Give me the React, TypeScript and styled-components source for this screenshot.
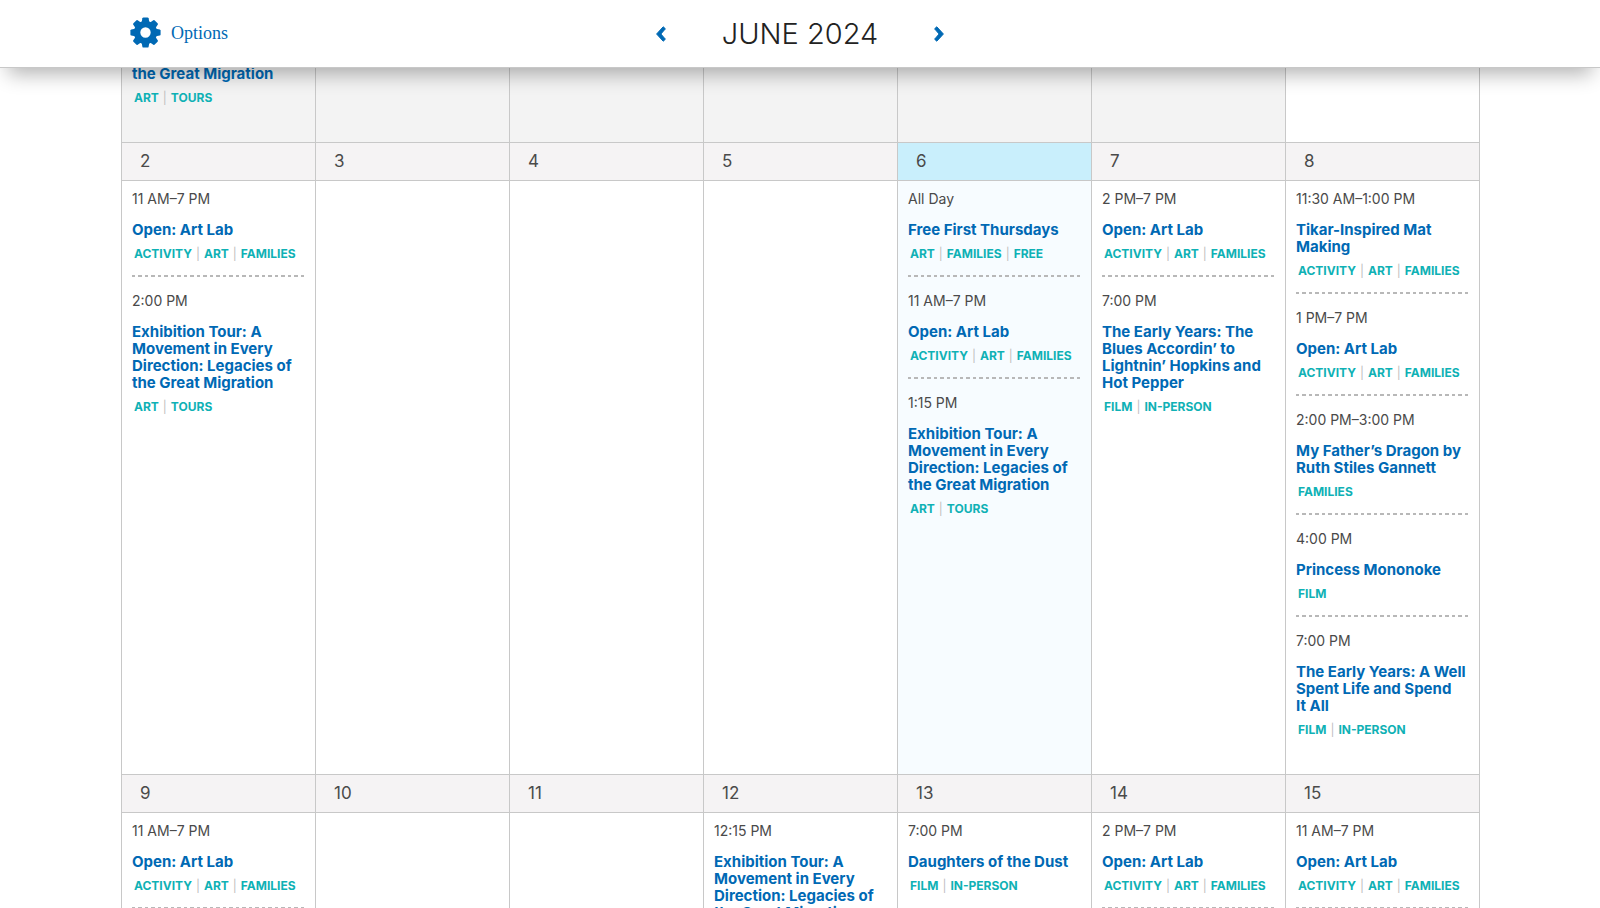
import React from 'react';
import styled, { createGlobalStyle } from 'styled-components';

const Global = createGlobalStyle`
  *, *::before, *::after { box-sizing: border-box; }
  html, body { margin: 0; background: #fff; }
  body { font-family: Inter, "Open Sans", sans-serif; color: #4a4a4a; }
`;

const Page = styled.div`
  height: 100vh;
  overflow: hidden;
`;

const Toolbar = styled.header`
  position: relative;
  z-index: 1;
  display: grid;
  grid-template-columns: 1fr auto 1fr;
  align-items: center;
  height: 68px;
  padding: 0 130px;
  background: #fff;
  border-bottom: 1px solid #c8c8c8;
  box-shadow: 0 14px 20px -8px rgba(0, 0, 0, 0.3);
`;

const OptionsButton = styled.button`
  display: flex;
  align-items: center;
  justify-self: start;
  gap: 10px;
  padding: 0 0 2px;
  border: 0;
  background: none;
  color: #0069b4;
  font: 18px/30px "Liberation Serif", serif;
  cursor: pointer;
`;

const MonthNav = styled.nav`
  display: flex;
  align-items: center;
  gap: 56px;
`;

const MonthTitle = styled.h1`
  margin: 0;
  color: #222;
  font: 300 29px/36px Inter, sans-serif;
`;

const ArrowButton = styled.button`
  display: flex;
  padding: 0;
  border: 0;
  background: none;
  color: #0069b4;
  cursor: pointer;
`;

const Calendar = styled.table`
  width: calc(85% - 1px);
  margin: -3px 7.5% 0 auto;
  border-collapse: collapse;
  table-layout: fixed;
`;

const DayNumber = styled.th<{ $today?: boolean }>`
  height: 38px;
  padding: 0 18px 2px;
  border: 1px solid #c8c8c8;
  background: ${(p) => (p.$today ? '#c9effc' : '#f5f3f4')};
  font-size: 17px;
  font-weight: 400;
  line-height: 20px;
  text-align: left;
`;

const DayCell = styled.td<{ $tone?: 'past' | 'today' }>`
  padding: 0 10px ${(p) => (p.$tone === 'past' ? 35 : 23)}px;
  border: 1px solid #c8c8c8;
  border-top: 0;
  background: ${(p) => (p.$tone === 'past' ? '#f3f3f3' : p.$tone === 'today' ? '#f7fcff' : '#fff')};
  vertical-align: top;
`;

const Event = styled.article<{ $divided: boolean }>`
  padding-top: 7px;

  & + & {
    padding-top: 13px;
  }

  &::after {
    content: "";
    display: block;
    height: ${(p) => (p.$divided ? 2 : 0)}px;
    margin-top: 12px;
    background: repeating-linear-gradient(
      90deg,
      #b8b8b8 0 3px,
      transparent 3px 6px,
      #b8b8b8 6px 10px,
      transparent 10px 13px
    );
  }
`;

const Time = styled.p`
  margin: 0 0 12px;
  font-size: 14px;
  line-height: 21px;
`;

const EventLink = styled.a`
  display: block;
  color: #0069b4;
  font-size: 15px;
  font-weight: 700;
  line-height: 17px;
  text-decoration: none;
`;

const Tags = styled.ul`
  display: flex;
  margin: 7px 0 0;
  padding: 0 2px;
  list-style: none;
`;

const Tag = styled.li`
  font-size: 12px;
  font-weight: 700;
  line-height: 18px;
  text-transform: uppercase;

  & + &::before {
    content: "|";
    margin: 0 4px;
    color: #c0c0c0;
    font-weight: 400;
  }
`;

const TagLink = styled.a`
  color: #0fb1b5;
  text-decoration: none;
`;

type Item = { time?: string; title: string; tags: string[] };
type Day = { n?: number; tone?: 'past' | 'today'; more?: boolean; items: Item[] };

const lab = (time: string): Item => ({ time, title: 'Open: Art Lab', tags: ['Activity', 'Art', 'Families'] });
const tour = (time: string): Item => ({
  time,
  title: 'Exhibition Tour: A Movement in Every Direction: Legacies of the Great Migration',
  tags: ['Art', 'Tours'],
});

const weeks: Day[][] = [
  [
    { n: 2, items: [lab('11 AM–7 PM'), tour('2:00 PM')] },
    { n: 3, items: [] },
    { n: 4, items: [] },
    { n: 5, items: [] },
    {
      n: 6,
      tone: 'today',
      items: [
        { time: 'All Day', title: 'Free First Thursdays', tags: ['Art', 'Families', 'Free'] },
        lab('11 AM–7 PM'),
        tour('1:15 PM'),
      ],
    },
    {
      n: 7,
      items: [
        lab('2 PM–7 PM'),
        { time: '7:00 PM', title: 'The Early Years: The Blues Accordin’ to Lightnin’ Hopkins and Hot Pepper', tags: ['Film', 'In-Person'] },
      ],
    },
    {
      n: 8,
      items: [
        { time: '11:30 AM–1:00 PM', title: 'Tikar-Inspired Mat Making', tags: ['Activity', 'Art', 'Families'] },
        lab('1 PM–7 PM'),
        { time: '2:00 PM–3:00 PM', title: 'My Father’s Dragon by Ruth Stiles Gannett', tags: ['Families'] },
        { time: '4:00 PM', title: 'Princess Mononoke', tags: ['Film'] },
        { time: '7:00 PM', title: 'The Early Years: A Well Spent Life and Spend It\u00a0All', tags: ['Film', 'In-Person'] },
      ],
    },
  ],
  [
    { n: 9, more: true, items: [lab('11 AM–7 PM')] },
    { n: 10, items: [] },
    { n: 11, items: [] },
    { n: 12, items: [tour('12:15 PM')] },
    { n: 13, items: [{ time: '7:00 PM', title: 'Daughters of the Dust', tags: ['Film', 'In-Person'] }] },
    { n: 14, more: true, items: [lab('2 PM–7 PM')] },
    { n: 15, more: true, items: [lab('11 AM–7 PM')] },
  ],
];

function TagList({ tags }: { tags: string[] }) {
  return (
    <Tags>
      {tags.map((t) => (
        <Tag key={t}><TagLink href="#">{t}</TagLink></Tag>
      ))}
    </Tags>
  );
}

function GearIcon() {
  return (
    <svg width="31" height="31" viewBox="0 0 31 31" fill="currentColor" aria-hidden="true">
      <circle cx="15.5" cy="15.5" r="8.4" fill="none" stroke="currentColor" strokeWidth="6.4" />
      {[0, 45, 90, 135, 180, 225, 270, 315].map((a) => (
        <path key={a} d="M11.4 6.5 L12.4 1.3 Q12.6 .4 13.5 .4 H17.5 Q18.4 .4 18.6 1.3 L19.6 6.5Z" transform={`rotate(${a} 15.5 15.5)`} />
      ))}
    </svg>
  );
}

function Chevron({ d }: { d: string }) {
  return (
    <svg width="10" height="16" viewBox="0 0 10 16" aria-hidden="true">
      <path d={d} fill="currentColor" stroke="currentColor" strokeLinejoin="round" />
    </svg>
  );
}

export default function App() {
  return (
    <Page>
      <Global />
      <Toolbar>
        <OptionsButton type="button">
          <GearIcon />
          Options
        </OptionsButton>
        <MonthNav aria-label="Month">
          <ArrowButton type="button" aria-label="Previous month">
            <Chevron d="M7.2 .8 L9.4 2.8 L4.9 8 L9.4 13.2 L7.2 15.2 L.6 8Z" />
          </ArrowButton>
          <MonthTitle>JUNE 2024</MonthTitle>
          <ArrowButton type="button" aria-label="Next month">
            <Chevron d="M2.8 .8 L.6 2.8 L5.1 8 L.6 13.2 L2.8 15.2 L9.4 8Z" />
          </ArrowButton>
        </MonthNav>
      </Toolbar>
      <Calendar aria-label="June 2024">
        <tbody>
          <tr>
            <DayCell $tone="past">
              <EventLink href="#">the Great Migration</EventLink>
              <TagList tags={['Art', 'Tours']} />
            </DayCell>
            {[1, 2, 3, 4, 5].map((i) => <DayCell key={i} $tone="past" />)}
            <DayCell />
          </tr>
          {weeks.map((week, w) => (
            <React.Fragment key={w}>
              <tr>
                {week.map((d) => <DayNumber key={d.n} scope="col" $today={d.tone === 'today'}>{d.n}</DayNumber>)}
              </tr>
              <tr>
                {week.map((d) => (
                  <DayCell key={d.n} $tone={d.tone}>
                    {d.items.map((e, i) => (
                      <Event key={i} $divided={!!d.more || i < d.items.length - 1}>
                        <Time>{e.time}</Time>
                        <EventLink href="#">{e.title}</EventLink>
                        <TagList tags={e.tags} />
                      </Event>
                    ))}
                  </DayCell>
                ))}
              </tr>
            </React.Fragment>
          ))}
        </tbody>
      </Calendar>
    </Page>
  );
}
